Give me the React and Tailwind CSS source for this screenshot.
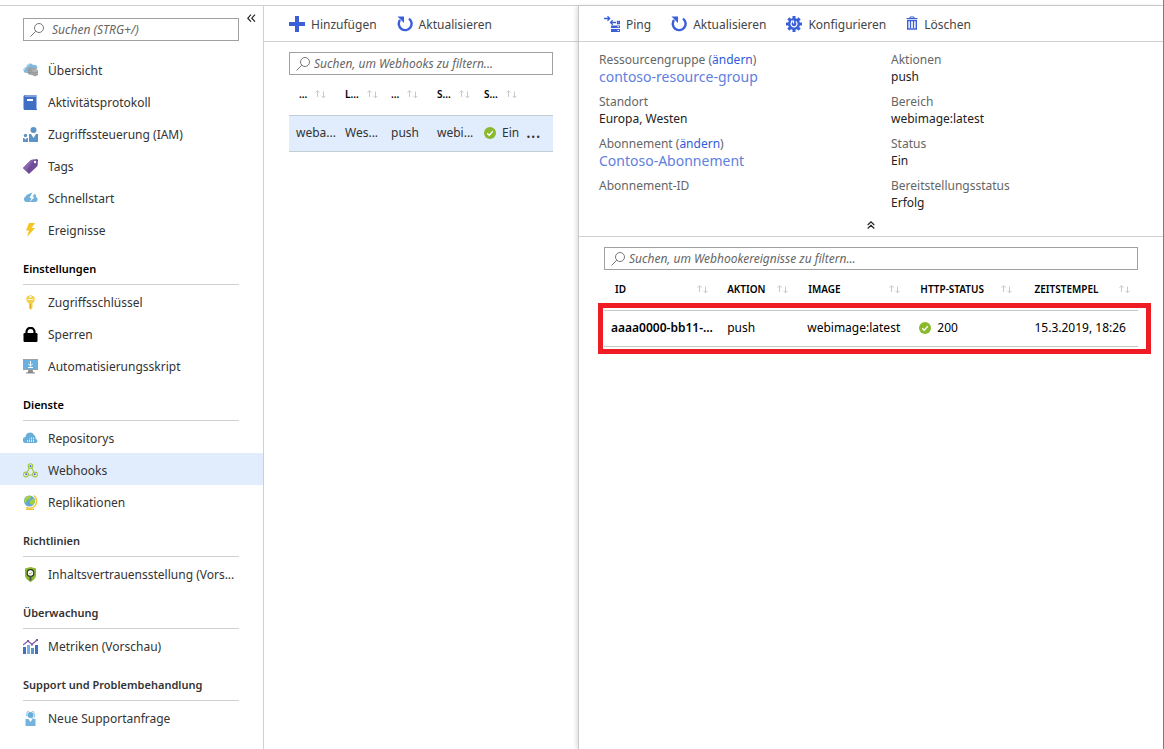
const ICONS = {
  overview: (
    <>
      <path d="M4 10a3 3 0 0 1-1-6 4 4 0 0 1 7-2 3 3 0 0 1 4 4l-6 5z" fill="#7fb9df" />
      <path d="M1.500 7a2.500 2.500 0 0 1 2-3 3.500 3.500 0 0 1 3-2.500" stroke="#d5eaf7" strokeWidth=".8" fill="none" />
      <path d="M5 5l3-1 4 1v6l-4 1-3-1z" fill="#a0a1a2" />
      <path d="M9 7l3-1 3 1v5l-3 1.500-3-1.500z" fill="#b0b1b2" />
      <path d="M5 6.500l3 1M5 9l3 1M9 9l3 1 3-1M9 11l3 1 3-1" stroke="#858585" strokeWidth=".7" fill="none" />
    </>
  ),
  log: (
    <>
      <path d="M2 0h12v15H2a1.500 1.500 0 0 1-1.500-1.500v-12A1.500 1.500 0 0 1 2 0z" fill="#3e6fc4" />
      <path d="M2 0.500h11.500v1H2z" fill="#c3d3ee" />
      <path d="M13 0h1v14h-1z" fill="#9db8e4" />
      <path d="M4 4h6v2H4z" fill="#fff" />
    </>
  ),
  iam: (
    <>
      <circle cx="10.500" cy="3" r="3" fill="#5b94c5" />
      <path d="M6 7h2l2.500 4L13 7h2v8H6z" fill="#5b94c5" />
      <circle cx="2.500" cy="8.500" r="1.700" fill="#5b94c5" />
      <path d="M0 11h1.200l1.300 1.800L3.800 11H5v4H0z" fill="#5b94c5" />
    </>
  ),
  tag: (
    <>
      <path d="M8 1l6-1 1 1-.5 6L6 15 0 9z" fill="#6f4b98" />
      <path d="M8 1L0 9l3 3L11 .5z" fill="#8962b0" />
      <circle cx="12" cy="3" r="1.200" fill="#fff" />
    </>
  ),
  quick: (
    <>
      <path d="M3 11a3 3 0 0 1-.5-5.500A4 4 0 0 1 6 3a4.500 4.500 0 0 1 6 0 3 3 0 0 1 1 3 2.600 2.600 0 0 1-.5 5z" fill="#72b1d9" />
      <path d="M9 2L6.500 7h2L7 11l4.500-5h-2L12 2z" fill="#fff" />
    </>
  ),
  bolt: <path d="M6 0h6L8.500 5H12L4 14l2-6.500H3z" fill="#f5c421" />,
  key: (
    <>
      <path d="M7.500 0L11 1.500l1 3-1.500 3-1 .7V13l-1.800 2-1.800-2V8.200l-1.200-.7L3 4.500l1-3z" fill="#f3cf46" />
      <circle cx="7.500" cy="1.800" r="1" fill="#fff" />
      <path d="M4.500 4.500h6" stroke="#fff" strokeWidth=".8" />
      <path d="M7.500 8.500v5" stroke="#d9a91c" strokeWidth=".8" />
    </>
  ),
  lock: (
    <>
      <rect x="0.500" y="6" width="14" height="9" rx="1.200" fill="#000" />
      <path d="M3.500 7V4.800a4 4 0 0 1 8 0V7" stroke="#000" strokeWidth="2.200" fill="none" />
    </>
  ),
  script: (
    <>
      <path d="M0 0h15v11H0z" fill="#a0a1a2" />
      <path d="M1 1h13v9H1z" fill="#68b0e0" />
      <path d="M5.500 11h4l1 2.500h1.500v1H3v-1h1.500z" fill="#8a8b8c" />
      <path d="M7.500 2v4.500M5.300 5l2.200 2 2.200-2M5 8.500h5" stroke="#fff" fill="none" />
    </>
  ),
  repos: (
    <>
      <path d="M3 12a3 3 0 0 1-.5-6A4.500 4.500 0 0 1 11 4a3.500 3.500 0 0 1 1.500 4 2 2 0 0 1 0 4z" fill="#68aed8" />
      <path d="M4.500 11V9M6.500 11V7.500M8.500 11V6M10.500 11V6.500" stroke="#d8ecf8" strokeDasharray="2 .6" />
    </>
  ),
  hook: (
    <>
      <g fill="#fff" stroke="#a5c63b" strokeWidth="1.100">
        <path d="M6.300 5L4.300 9M8.700 5l2 4M5.500 12h4" />
        <circle cx="7.500" cy="3" r="2.300" />
        <circle cx="3" cy="11.500" r="2.400" />
        <circle cx="12" cy="11.500" r="2.400" />
      </g>
      <g fill="#3f6fd1">
        <circle cx="7.500" cy="3.200" r="1.100" />
        <circle cx="3.200" cy="11.300" r="1.100" />
        <circle cx="11.800" cy="11.300" r="1.100" />
      </g>
    </>
  ),
  globe: (
    <>
      <path d="M11 0.500a7.500 7.500 0 0 1-1 12L7 13.500l-4-1" stroke="#eec73c" strokeWidth="1.400" fill="none" />
      <circle cx="6.500" cy="6" r="5.500" fill="#5fa8d8" />
      <path d="M2 3a5.500 5.500 0 0 1 6-2l-1 3-3 1-1 3-2-1zM7 6l4-3 1 4-2 3-3-1z" fill="#a5cf3c" />
      <path d="M3 14.500h8" stroke="#eec73c" strokeWidth="1.500" />
    </>
  ),
  shield: (
    <>
      <path d="M7.500 0L13 1.500V8c0 3.500-3 5.500-5.500 7C5 13.500 2 11.500 2 8V1.500z" fill="#8ab82c" />
      <circle cx="7.500" cy="6" r="3.300" fill="#fff" stroke="#333" strokeWidth="1.200" />
      <path d="M6 6l1.200 1.200L9.300 5" stroke="#8ab82c" fill="none" />
      <path d="M6.500 9.500h2V13l-1 1-1-1z" fill="#555" />
    </>
  ),
  metrics: (
    <>
      <path d="M0 8h3v7H0zM12 6h3v9h-3z" fill="#3f70c2" />
      <path d="M4 6h3v9H4z" fill="#6fb3e0" />
      <path d="M8 9h3v6H8z" fill="#5b94c5" />
      <path d="M0 6l5-4 4 3.500 5-4.500" stroke="#7f58a5" strokeWidth="1.300" fill="none" />
      <path d="M4 1h2v2H4zM8 4.500h2v2H8zM13 0h2v2h-2z" fill="#7f58a5" />
    </>
  ),
  support: (
    <>
      <circle cx="7.500" cy="4" r="3" fill="#68aed8" />
      <path d="M3.500 5V3.500a4 4 0 0 1 8 0V5c0 1.500-1 2.500-3 2.500" stroke="#8cc4e6" fill="none" />
      <path d="M2.500 8h3l2 3 2-3h3v7h-10z" fill="#74b4dc" />
    </>
  ),
};

const NAV = [
  {
    items: [
      { icon: 'overview', label: 'Übersicht' },
      { icon: 'log', label: 'Aktivitätsprotokoll' },
      { icon: 'iam', label: 'Zugriffssteuerung (IAM)' },
      { icon: 'tag', label: 'Tags' },
      { icon: 'quick', label: 'Schnellstart' },
      { icon: 'bolt', label: 'Ereignisse' },
    ],
  },
  {
    title: 'Einstellungen',
    strong: true,
    items: [
      { icon: 'key', label: 'Zugriffsschlüssel' },
      { icon: 'lock', label: 'Sperren' },
      { icon: 'script', label: 'Automatisierungsskript' },
    ],
  },
  {
    title: 'Dienste',
    strong: true,
    items: [
      { icon: 'repos', label: 'Repositorys' },
      { icon: 'hook', label: 'Webhooks', active: true },
      { icon: 'globe', label: 'Replikationen' },
    ],
  },
  { title: 'Richtlinien', items: [{ icon: 'shield', label: 'Inhaltsvertrauensstellung (Vors...' }] },
  { title: 'Überwachung', items: [{ icon: 'metrics', label: 'Metriken (Vorschau)' }] },
  { title: 'Support und Problembehandlung', items: [{ icon: 'support', label: 'Neue Supportanfrage' }] },
];

const HOOK_COLUMNS = [
  { label: '...', width: 'w-14 pl-2.5' },
  { label: 'L...', width: 'w-[46px]' },
  { label: '...', width: 'w-[46px]' },
  { label: 'S...', width: 'w-[47px]' },
  { label: 'S...', width: 'w-[42px]' },
];

const EVENT_COLUMNS = [
  { label: 'ID', width: 'w-[21%] pl-[11px]' },
  { label: 'AKTION', width: 'w-[15%] pl-[11px]' },
  { label: 'IMAGE', width: 'w-[21%] pl-3' },
  { label: 'HTTP-STATUS', width: 'w-[21%] pl-3' },
  { label: 'ZEITSTEMPEL', width: 'w-[22%] pl-3.5' },
];

function SearchBox({ label, tight }) {
  return (
    <label className="flex h-[23px] items-center border border-[#a0a0a0] bg-white pl-1.5">
      <svg width="14" height="14" viewBox="0 0 14 14" fill="none" stroke="#777" className="shrink-0">
        <circle cx="9" cy="5" r="4.500" />
        <path d="M5.800 8.200L0.500 13.500" />
      </svg>
      <input
        type="text"
        aria-label={label}
        placeholder={label}
        className={`min-w-0 flex-1 bg-transparent italic outline-none placeholder:text-[#666] ${tight ? 'pl-1' : 'pl-2'}`}
      />
    </label>
  );
}

function RefreshIcon() {
  return (
    <svg width="16" height="16" viewBox="0 0 16 16">
      <path d="M12 2.600A6.400 6.400 0 1 1 3 4" stroke="#3b5fd9" strokeWidth="2.400" fill="none" />
      <path d="M0.500 0.500H7v6.500z" fill="#3b5fd9" />
    </svg>
  );
}

function AddIcon() {
  return (
    <svg width="16" height="16" viewBox="0 0 16 16" fill="#3b5fd9">
      <path d="M6 0h4v6h6v4h-6v6H6v-6H0V6h6z" />
    </svg>
  );
}

function PingIcon() {
  return (
    <svg width="16" height="16" viewBox="0 0 16 16">
      <g fill="none" stroke="#3b5fd9" strokeWidth="1.300">
        <path d="M0 2.500h5.500M3.500 0.300l2.200 2.200-2.200 2.200M12 6.500H6.500M8.700 4.300L6.500 6.500l2.200 2.200" />
        <path d="M13.500 5.500h2v2h-2z" />
      </g>
      <path d="M7 9.500h9V12H7zM7 13h9v3H7z" fill="#3b5fd9" />
      <path d="M13.500 10.300H15v1h-1.500zM13.500 14H15v1h-1.500z" fill="#fff" />
    </svg>
  );
}

function GearIcon() {
  return (
    <svg width="16" height="16" viewBox="0 0 16 16">
      <g fill="#3b5fd9">
        <circle cx="8" cy="8" r="6" />
        <path d="M6.500 0h3v16h-3zM0 6.500h16v3H0z" />
        <path d="M6.500 0h3v16h-3zM0 6.500h16v3H0z" transform="rotate(45 8 8)" />
      </g>
      <path d="M9.800 5.500A3 3 0 1 1 6.200 5.500M5 5h2.500v2.500" stroke="#fff" strokeWidth="1.200" fill="none" />
    </svg>
  );
}

function TrashIcon() {
  return (
    <svg width="12" height="16" viewBox="0 0 12 16" fill="none" stroke="#3b5fd9">
      <path d="M0.500 2.500h11M4 2V1h4v1" />
      <path d="M1.700 4.500h8.600V13H1.700z" strokeWidth="1.400" />
      <path d="M4.500 5v7M7.500 5v7" strokeWidth="1.300" />
    </svg>
  );
}

function SortIcon() {
  return (
    <svg width="11" height="9" viewBox="0 0 11 9" fill="none" stroke="#c9c9c9" className="shrink-0">
      <path d="M2.500 7V0.700M0.500 2.700l2-2 2 2M8.500 1.500v6.300M6.500 5.800l2 2 2-2" />
    </svg>
  );
}

function OkIcon() {
  return (
    <svg width="12" height="12" viewBox="0 0 12 12" className="shrink-0">
      <circle cx="6" cy="6" r="6" fill="#8ab92d" />
      <path d="M3.200 6.200l2 2 3.600-4" stroke="#fff" strokeWidth="1.300" fill="none" />
    </svg>
  );
}

function ToolButton({ icon, children }) {
  return (
    <button type="button" className="flex items-center gap-1.5 text-[#444]">
      {icon}
      <span className="pt-0.5">{children}</span>
    </button>
  );
}

function Fact({ label, change, value, link }) {
  return (
    <div className="h-[42px] pl-5">
      <dt className="leading-[17px] text-[#666]">
        {label}
        {change && (
          <>
            {' '}(<a href="#change" className="text-[#2f5bd7]">ändern</a>)
          </>
        )}
      </dt>
      <dd className="leading-[17px] text-[#222]">
        {link ? <a href="#resource" className="text-[14px] text-[#6080e0]">{value}</a> : value}
      </dd>
    </div>
  );
}

export default function App() {
  return (
    <div className="flex min-h-screen flex-col border-r border-[#6480b8] bg-white pt-[5px] font-['Noto_Sans','Open_Sans',sans-serif] text-[12px] text-[#333]">
      <div className="flex flex-1 border-t border-[#d0d0d0]">
        <nav className="w-[264px] shrink-0 border-r border-[#d0d0d0]">
          <div className="flex items-start gap-2 pt-2 pb-3 pl-[23px]">
            <div className="w-[216px] pt-1">
              <SearchBox label="Suchen (STRG+/)" />
            </div>
            <button type="button" aria-label="Menü einklappen">
              <svg width="9" height="9" viewBox="0 0 9 9" fill="none" stroke="#222" strokeWidth="1.200">
                <path d="M4 0.700L0.800 4.200 4 7.700M8 0.700L4.800 4.200 8 7.700" />
              </svg>
            </button>
          </div>
          {NAV.map((group, i) => (
            <div key={i}>
              {group.title && (
                <h2 className={`mr-6 ml-[23px] flex h-10 items-center border-b border-[#d0d0d0] pt-2.5 text-[11px] font-semibold ${group.strong ? 'text-black' : 'text-[#333]'}`}>
                  {group.title}
                </h2>
              )}
              <ul>
                {group.items.map((item) => (
                  <li key={item.label}>
                    <a
                      href="#nav"
                      className={`flex h-8 items-center gap-2.5 pt-0.5 pl-[23px] whitespace-nowrap ${item.active ? 'bg-[#e1edfc]' : ''}`}
                    >
                      <svg width="15" height="15" viewBox="0 0 15 15" className="shrink-0">{ICONS[item.icon]}</svg>
                      <span className="pt-0.5">{item.label}</span>
                    </a>
                  </li>
                ))}
              </ul>
            </div>
          ))}
        </nav>

        <section className="w-[314px] shrink-0">
          <div className="flex h-9 items-center gap-5 border-b border-[#d0d0d0] pl-[25px]">
            <ToolButton icon={<AddIcon />}>Hinzufügen</ToolButton>
            <ToolButton icon={<RefreshIcon />}>Aktualisieren</ToolButton>
          </div>
          <div className="px-[25px] pt-2.5">
            <SearchBox label="Suchen, um Webhooks zu filtern..." tight />
            <table className="w-full table-fixed text-left">
              <thead>
                <tr className="h-10">
                  {HOOK_COLUMNS.map((col, i) => (
                    <th key={i} className={`text-[10px] font-semibold text-black ${col.width}`}>
                      <span className="flex items-center gap-2">{col.label}<SortIcon /></span>
                    </th>
                  ))}
                  <th aria-label="Menü" />
                </tr>
              </thead>
              <tbody>
                <tr className="h-9 border-y border-[#c4ccd4] bg-[#e1edfc] whitespace-nowrap">
                  <td className="pl-[7px]">weba...</td>
                  <td>Wes...</td>
                  <td>push</td>
                  <td>webi...</td>
                  <td><span className="flex items-center gap-1.5"><OkIcon />Ein</span></td>
                  <td>
                    <button type="button" aria-label="Mehr" className="text-[18px] leading-4">...</button>
                  </td>
                </tr>
              </tbody>
            </table>
          </div>
        </section>

        <main className="min-w-0 flex-1 border-l border-[#c8c8c8] shadow-[-2px_0_4px_rgba(0,0,0,0.12)]">
          <div className="flex h-9 items-center gap-5 border-b border-[#d0d0d0] pl-[25px]">
            <ToolButton icon={<PingIcon />}>Ping</ToolButton>
            <ToolButton icon={<RefreshIcon />}>Aktualisieren</ToolButton>
            <ToolButton icon={<GearIcon />}>Konfigurieren</ToolButton>
            <ToolButton icon={<TrashIcon />}>Löschen</ToolButton>
          </div>
          <div className="border-b border-[#d0d0d0] pt-[9px]">
            <dl className="grid grid-cols-2">
              <Fact label="Ressourcengruppe" change value="contoso-resource-group" link />
              <Fact label="Aktionen" value="push" />
              <Fact label="Standort" value="Europa, Westen" />
              <Fact label="Bereich" value="webimage:latest" />
              <Fact label="Abonnement" change value="Contoso-Abonnement" link />
              <Fact label="Status" value="Ein" />
              <Fact label="Abonnement-ID" />
              <Fact label="Bereitstellungsstatus" value="Erfolg" />
            </dl>
            <button type="button" aria-label="Details einklappen" className="mx-auto flex h-[17px] w-4 items-start justify-center pt-0.5">
              <svg width="8" height="8" viewBox="0 0 8 8" fill="none" stroke="#222" strokeWidth="1.200">
                <path d="M0.700 4L4 0.900 7.300 4M0.700 7.500L4 4.400l3.300 3.100" />
              </svg>
            </button>
          </div>
          <div className="px-[25px] pt-2.5">
            <SearchBox label="Suchen, um Webhookereignisse zu filtern..." tight />
            <div className="relative">
              <table className="w-full table-fixed text-left text-black">
                <thead>
                  <tr className="h-10">
                    {EVENT_COLUMNS.map((col) => (
                      <th key={col.label} className={`text-[10px] font-semibold ${col.width}`}>
                        <span className="flex items-center justify-between pr-2">{col.label}<SortIcon /></span>
                      </th>
                    ))}
                  </tr>
                </thead>
                <tbody>
                  <tr className="h-9 border-y border-[#c8c8c8] whitespace-nowrap">
                    <td className="pl-[7px] font-semibold">aaaa0000-bb11-...</td>
                    <td className="pl-[11px]">push</td>
                    <td className="pl-[11px]">webimage:latest</td>
                    <td className="pl-[11px]"><span className="flex items-center gap-1.5"><OkIcon />200</span></td>
                    <td className="pl-3.5">15.3.2019, 18:26</td>
                  </tr>
                </tbody>
              </table>
              <div className="pointer-events-none absolute -right-[13px] -bottom-[7px] -left-1.5 h-[51px] border-5 border-[#ef1c24]" />
            </div>
          </div>
        </main>
      </div>
    </div>
  );
}
